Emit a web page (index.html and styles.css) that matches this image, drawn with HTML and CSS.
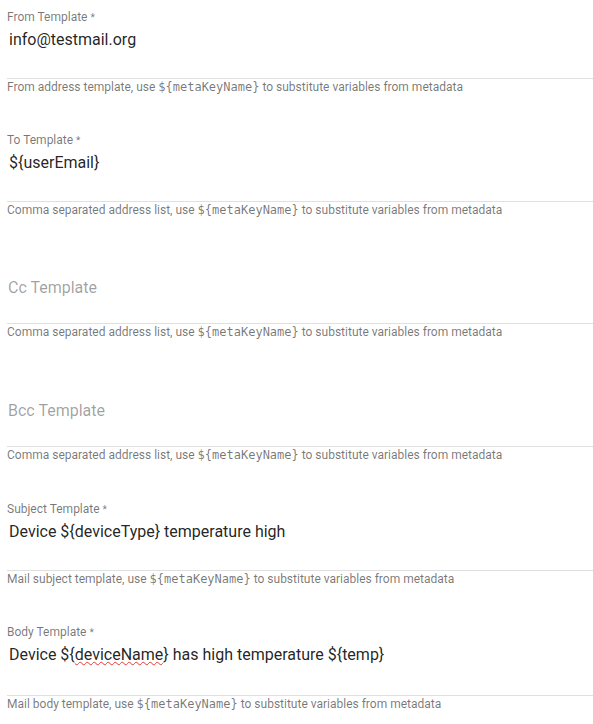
FILE: index.html
```
<!DOCTYPE html>
<html>
<head>
  <meta charset="utf-8">
  <title>Mail templates</title>
  <link rel="stylesheet" href="styles.css">
</head>
<body>

  <form class="mail-form">

    <div class="field">
      <div class="label">From Template<span class="req">*</span></div>
      <div class="value">info@testmail.org</div>
      <div class="line"></div>
      <div class="hint">From address template, use <code>${metaKeyName}</code> to substitute variables from metadata</div>
    </div>

    <div class="field">
      <div class="label">To Template<span class="req">*</span></div>
      <div class="value">${userEmail}</div>
      <div class="line"></div>
      <div class="hint">Comma separated address list, use <code>${metaKeyName}</code> to substitute variables from metadata</div>
    </div>

    <div class="field empty">
      <div class="label">&nbsp;</div>
      <div class="value placeholder">Cc Template</div>
      <div class="line"></div>
      <div class="hint">Comma separated address list, use <code>${metaKeyName}</code> to substitute variables from metadata</div>
    </div>

    <div class="field empty">
      <div class="label">&nbsp;</div>
      <div class="value placeholder">Bcc Template</div>
      <div class="line"></div>
      <div class="hint">Comma separated address list, use <code>${metaKeyName}</code> to substitute variables from metadata</div>
    </div>

    <div class="field">
      <div class="label">Subject Template<span class="req">*</span></div>
      <div class="value">Device ${deviceType} temperature high</div>
      <div class="line"></div>
      <div class="hint">Mail subject template, use <code>${metaKeyName}</code> to substitute variables from metadata</div>
    </div>

    <div class="field textarea">
      <div class="label">Body Template<span class="req">*</span></div>
      <div class="value">Device ${<span class="typo">deviceName</span>} has high temperature ${temp}</div>
      <div class="line"></div>
      <div class="hint">Mail body template, use <code>${metaKeyName}</code> to substitute variables from metadata</div>
    </div>

  </form>

</body>
</html>
```

FILE: styles.css
```
body {
    margin: 0;
    padding: 10px 0 0 7px;
    font-family: Roboto, "Liberation Sans", sans-serif;
    background: #fff;
    overflow: hidden;
}

.mail-form {
    display: flex;
    flex-direction: column;
}

.field {
    display: flex;
    flex-direction: column;
    height: 123px;
}

.label {
    font-size: 12px;
    line-height: 14px;
    color: rgba(0, 0, 0, 0.54);
}

.req {
    margin-left: 3px;
    font-size: 10px;
}

.value {
    margin-top: 5px;
    padding-left: 2px;
    font-size: 16px;
    line-height: 20px;
    color: rgba(0, 0, 0, 0.87);
}

.value.placeholder {
    padding-left: 1px;
    position: relative;
    top: 3px;
    color: rgba(0, 0, 0, 0.38);
}

.typo {
    text-decoration: underline wavy #e53935;
    text-decoration-thickness: 1px;
    text-underline-offset: 1px;
}

.line {
    margin-top: 28px;
    height: 1px;
    background: rgba(0, 0, 0, 0.12);
}

.textarea .line {
    margin-top: 30px;
}

.hint {
    margin-top: 1px;
    font-size: 12px;
    line-height: 14px;
    color: rgba(0, 0, 0, 0.54);
}

.hint code {
    font-family: "DejaVu Sans Mono", "Liberation Mono", monospace;
    font-size: 12px;
}
```
